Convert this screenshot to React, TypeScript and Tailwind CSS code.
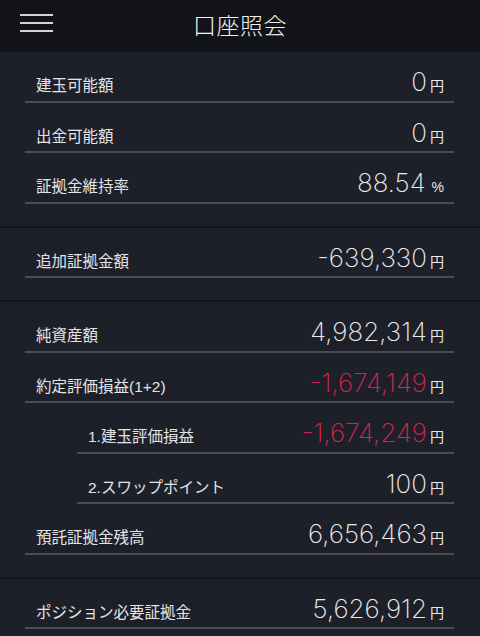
type Row = {
  label: string;
  value: string;
  unit?: string;
  red?: boolean;
  indent?: boolean;
};

const sections: Row[][] = [
  [
    { label: "建玉可能額", value: "0" },
    { label: "出金可能額", value: "0" },
    { label: "証拠金維持率", value: "88.54", unit: "%" },
  ],
  [{ label: "追加証拠金額", value: "-639,330" }],
  [
    { label: "純資産額", value: "4,982,314" },
    { label: "約定評価損益(1+2)", value: "-1,674,149", red: true },
    { label: "1.建玉評価損益", value: "-1,674,249", red: true, indent: true },
    { label: "2.スワップポイント", value: "100", indent: true },
    { label: "預託証拠金残高", value: "6,656,463" },
  ],
  [{ label: "ポジション必要証拠金", value: "5,626,912" }],
];

const jp = "font-['Noto_Sans_CJK_JP',sans-serif]";
const label = "font-['Liberation_Sans','Noto_Sans_CJK_JP',sans-serif]";

function Line({ item }: { item: Row }) {
  return (
    <div
      className={
        "h-[50.5px] flex flex-col justify-end mr-[26px] " +
        (item.indent ? "ml-[77px]" : "ml-[25px]")
      }
    >
      <div className="flex items-baseline justify-between px-[10px] pb-[3px] border-b-2 border-[#4a4c53]">
        <span className={label + " text-[15.5px] text-[#e4e4e6] pl-px"}>{item.label}</span>
        <span className="flex items-baseline">
          <span
            className={
              "font-['Inter',sans-serif] font-extralight text-[26px] leading-none " +
              (item.red ? "text-[#d2264f]" : "text-[#ececee]")
            }
          >
            {item.value}
          </span>
          {item.unit === "%" ? (
            <span className="font-['Liberation_Sans',sans-serif] text-[14px] text-[#e8e8ea] ml-[6px]">%</span>
          ) : (
            <span className={jp + " text-[14px] text-[#e8e8ea] ml-[3px]"}>円</span>
          )}
        </span>
      </div>
    </div>
  );
}

export default function App() {
  return (
    <div className="w-[480px] h-[636px] overflow-hidden bg-[#1e2029]">
      {/* header */}
      <div className="h-[52px] bg-[#121318] relative flex items-center justify-center">
        <div className="absolute left-[20px] top-[14px] w-[33px] flex flex-col gap-[6px]">
          <div className="h-[2px] bg-[#d4d4d6]" />
          <div className="h-[2px] bg-[#d4d4d6]" />
          <div className="h-[2px] bg-[#d4d4d6]" />
        </div>
        <span className={jp + " text-[23px] text-[#f2f2f4] font-light tracking-[0.5px] -mt-[4px]"}>
          口座照会
        </span>
      </div>
      {sections.map((rows, i) => (
        <div key={i}>
          {i > 0 && <div className="h-[2px] bg-[#141519]" />}
          <div className="pb-[22px]">
            {rows.map((r, j) => (
              <Line key={j} item={r} />
            ))}
          </div>
        </div>
      ))}
    </div>
  );
}
